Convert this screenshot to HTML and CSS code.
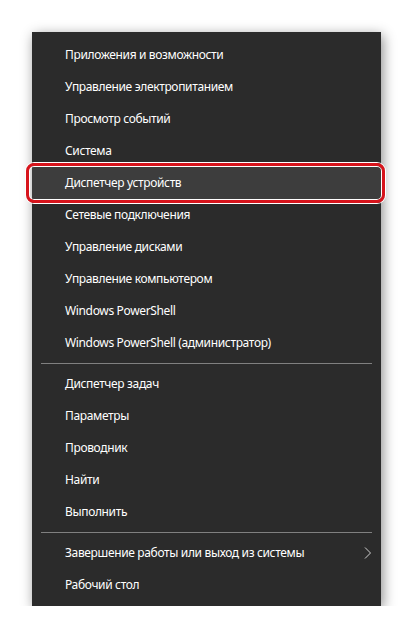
FILE: index.html
```html
<!DOCTYPE html>
<html lang="ru">
<head>
    <meta charset="UTF-8">
    <meta name="viewport" content="width=device-width, initial-scale=1.0">
    <title>Меню Win+X</title>
    <link rel="stylesheet" href="styles.css">
</head>
<body>

<div class="menu">
    <!-- Системные инструменты -->
    <div class="item">Приложения и возможности</div>
    <div class="item">Управление электропитанием</div>
    <div class="item">Просмотр событий</div>
    <div class="item">Система</div>
    <div class="item active">Диспетчер устройств</div>
    <div class="item">Сетевые подключения</div>
    <div class="item">Управление дисками</div>
    <div class="item">Управление компьютером</div>
    <div class="item">Windows PowerShell</div>
    <div class="item">Windows PowerShell (администратор)</div>

    <div class="separator"></div>

    <div class="item">Диспетчер задач</div>
    <div class="item">Параметры</div>
    <div class="item">Проводник</div>
    <div class="item">Найти</div>
    <div class="item">Выполнить</div>

    <div class="separator"></div>

    <!-- Завершение работы -->
    <div class="item submenu">
        <span>Завершение работы или выход из системы</span>
        <svg class="chevron" width="8" height="12" viewBox="0 0 8 12">
            <polyline points="1,0.5 6.5,6 1,11.5" fill="none" stroke="#d0d0d0" stroke-width="1"/>
        </svg>
    </div>
    <div class="item">Рабочий стол</div>
</div>

</body>
</html>
```

FILE: styles.css
```css
/* Фон страницы */
body {
    background-color: #fff;
    margin: 0;
    font-family: "Noto Sans", "Open Sans", sans-serif;
}

.menu {
    display: flex;
    flex-direction: column;
    width: 349px;
    height: 574px;
    box-sizing: border-box;
    margin: 32px 0 0 32px;
    padding: 7px 0 5px;
    background-color: #2b2b2b;
    box-shadow: 2px 3px 12px rgba(0, 0, 0, 0.45);
}

.item {
    display: flex;
    align-items: center;
    height: 32px;
    box-sizing: border-box;
    padding: 0 9px 1px 33px;
    color: #fff;
    font-size: 12px;
    letter-spacing: -0.35px;
    white-space: nowrap;
    position: relative;
}

.item.active {
    background-color: #3d3d3d;
}

/* Красная рамка вокруг выделенного пункта */
.item.active::after {
    content: "";
    position: absolute;
    top: -4px;
    bottom: -4px;
    left: -6px;
    right: -4px;
    border: 3px solid #d7141c;
    border-radius: 8px;
    box-shadow: 0 0 0 1px #fff, inset 0 0 0 1px #fff;
}

.submenu {
    justify-content: space-between;
}

.chevron {
    display: block;
}

.separator {
    height: 1px;
    margin: 4px 9px;
    background-color: #808080;
}
```
